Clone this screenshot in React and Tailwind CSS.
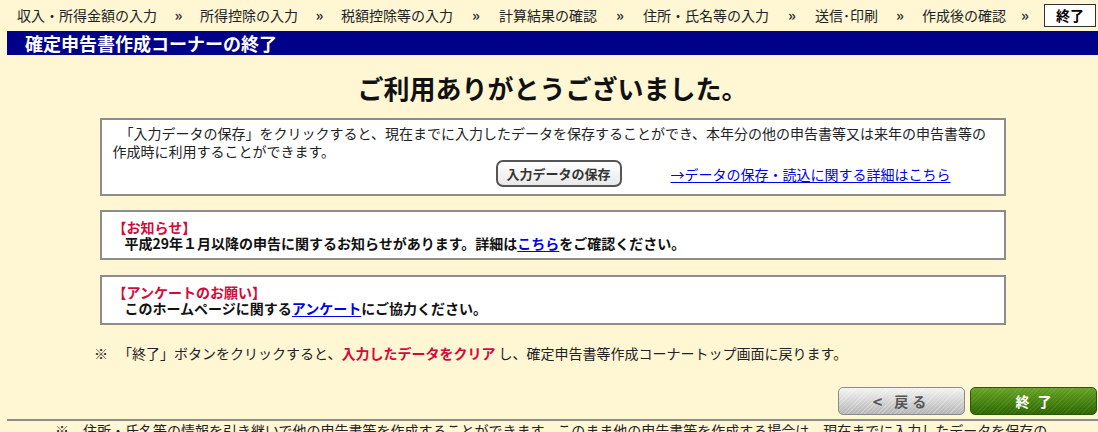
import React from "react";

const steps = [
  { label: "収入・所得金額の入力", sep: "w-[43px]" },
  { label: "所得控除の入力", sep: "w-[43px]" },
  { label: "税額控除等の入力", sep: "w-[46px]" },
  { label: "計算結果の確認", sep: "w-[46px]" },
  { label: "住所・氏名等の入力", sep: "w-[46px]" },
  { label: "送信･印刷", sep: "w-[44px]" },
  { label: "作成後の確認", sep: "w-[38px]" },
];

function StepNav() {
  return (
    <nav className="h-[31px] flex items-center pl-[17px] text-[14px] text-[#222]">
      {steps.map((s) => (
        <React.Fragment key={s.label}>
          <span className="whitespace-nowrap">{s.label}</span>
          <span className={`${s.sep} text-center text-[15px] font-bold text-[#333]`}>»</span>
        </React.Fragment>
      ))}
      <span className="w-[52px] h-[23px] flex items-center justify-center border border-[#333] bg-white font-bold text-[14px] text-black">
        終了
      </span>
    </nav>
  );
}

function NoticeBox({ title, children }) {
  return (
    <div className="mx-auto w-[906px] border-2 border-[#8c8c8c] bg-white pt-[7px] pb-[7px] pl-[11px] text-[14px] leading-[16px]">
      <div className="font-bold text-[#d4093a]">{title}</div>
      <div className="font-bold text-[#111] pl-[12px]">{children}</div>
    </div>
  );
}

export default function App() {
  return (
    <div className="h-[432px] overflow-hidden bg-[#fff6d4] font-['Noto_Sans_CJK_JP','Noto_Sans',sans-serif] text-[#222]">
      <StepNav />

      <div className="ml-[7px] h-[24px] bg-[#000088] flex items-center pl-[18px]">
        <h1 className="text-white font-bold text-[18px] leading-none">確定申告書作成コーナーの終了</h1>
      </div>

      <div className="ml-[7px]">
        <h2 className="mt-[15px] mb-[12px] text-center text-[26px] leading-[36px] font-bold text-[#111]">
          ご利用ありがとうございました。
        </h2>

        <div className="mx-auto w-[906px] border-2 border-[#8c8c8c] bg-white pt-[4px] pb-[7px] px-[11px] text-[14px] leading-[18px]">
          <p className="whitespace-nowrap">
            {"\u3000"}「入力データの保存」をクリックすると、現在までに入力したデータを保存することができ、本年分の他の申告書等又は来年の申告書等の
            <br />
            作成時に利用することができます。
          </p>
          <div className="flex items-center justify-end gap-[49px] pr-[42px]">
            <button className="w-[126px] h-[27px] rounded-[7px] border-2 border-[#555] bg-[linear-gradient(#ffffff,#e9e9e9)] text-[13px] font-bold text-[#333] leading-none">
              入力データの保存
            </button>
            <a href="#" className="text-[14px] text-[#0000ee] underline underline-offset-2 whitespace-nowrap">
              →データの保存・読込に関する詳細はこちら
            </a>
          </div>
        </div>

        <div className="mt-[14px]">
          <NoticeBox title="【お知らせ】">
            平成29年１月以降の申告に関するお知らせがあります。詳細は
            <a href="#" className="text-[#0000ee] underline underline-offset-2">こちら</a>
            をご確認ください。
          </NoticeBox>
        </div>

        <div className="mt-[15px]">
          <NoticeBox title="【アンケートのお願い】">
            このホームページに関する
            <a href="#" className="text-[#0000ee] underline underline-offset-2">アンケート</a>
            にご協力ください。
          </NoticeBox>
        </div>

        <div className="mt-[18px] flex items-center pl-[87px] text-[14px] leading-[20px] whitespace-nowrap">
          <span className="w-[24px]">※</span>
          <span>
            「終了」ボタンをクリックすると、
            <span className="font-bold text-[#d4093a]">入力したデータをクリア</span> し、確定申告書等作成コーナートップ画面に戻ります。
          </span>
        </div>

        <div className="mt-[24px] flex justify-end gap-[5px] pr-[1px]">
          <button className="w-[127px] h-[28px] rounded-[5px] border border-[#8a8a8a] bg-[image:repeating-linear-gradient(135deg,rgba(255,255,255,0.25)_0px,rgba(255,255,255,0.25)_1px,transparent_1px,transparent_3px),linear-gradient(#f4f4f4,#b4b4b4)] text-[14px] font-bold text-[#555] tracking-[4px] flex items-center justify-center">
            <span className="mr-[8px] text-[16px]">&lt;</span>戻る
          </button>
          <button className="w-[127px] h-[28px] rounded-[5px] border border-[#2a5a00] bg-[image:repeating-linear-gradient(135deg,rgba(255,255,255,0.08)_0px,rgba(255,255,255,0.08)_1px,transparent_1px,transparent_3px),linear-gradient(#65a324,#2d6600)] text-[14px] font-bold text-white tracking-[8px] flex items-center justify-center pl-[8px]">
            終了
          </button>
        </div>

        <div className="mt-[4px] h-[2px] bg-[#8c8c8c]" />

        <p className="pl-[48px] text-[14px] leading-[18px] whitespace-nowrap">
          ※　住所・氏名等の情報を引き継いで他の申告書等を作成することができます。このまま他の申告書等を作成する場合は、現在までに入力したデータを保存の
        </p>
      </div>
    </div>
  );
}
